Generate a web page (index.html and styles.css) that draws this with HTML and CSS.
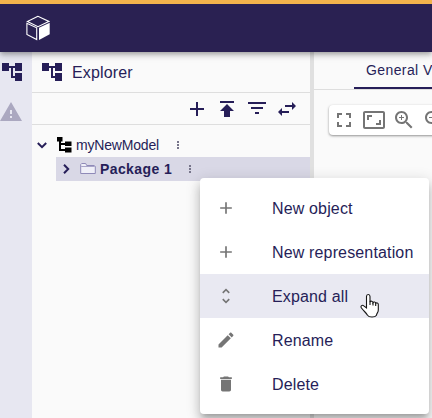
FILE: index.html
```html
<!DOCTYPE html>
<html lang="en">
<head>
<meta charset="utf-8">
<title>Explorer</title>
<link rel="stylesheet" href="styles.css">
</head>
<body>
<svg class="defs">
  <symbol id="tree" viewBox="0 0 24 24"><path d="M22 11V3h-7v3H9V3H2v8h7V8h2v10h4v3h7v-8h-7v3h-2V8h2v3z"/></symbol>
  <symbol id="add" viewBox="0 0 24 24"><path d="M19 13h-6v6h-2v-6H5v-2h6V5h2v6h6v2z"/></symbol>
  <symbol id="dots" viewBox="0 0 12 12"><path d="M5 2h2v2H5zM5 5h2v2H5zM5 8h2v2H5z"/></symbol>
</svg>
<div class="app">
  <header class="navbar">
    <svg class="logo" viewBox="0 0 24 26"><path class="logo-line" d="M12 1.3 1.4 6.4 12 11.7 22.8 6.4zM.9 8.3v11.2l9.8 5V12.8z"/><path class="logo-face" d="M13 12.8 23.7 7.8V19.3L13 24.9z"/></svg>
  </header>
  <main class="workbench">
    <nav class="rail">
      <svg class="icon"><use href="#tree"/></svg>
      <svg class="icon warning" viewBox="0 0 24 24"><path d="M1 21h22L12 2 1 21zm12-3h-2v-2h2v2zm0-4h-2v-4h2v4z"/></svg>
    </nav>
    <section class="explorer">
      <div class="explorer-title"><svg class="icon"><use href="#tree"/></svg><span>Explorer</span></div>
      <div class="explorer-tools">
        <svg class="icon"><use href="#add"/></svg>
        <svg class="icon" viewBox="0 0 24 24"><path d="M5 4v2h14V4H5zm0 10h4v6h6v-6h4l-7-7-7 7z"/></svg>
        <svg class="icon filter" viewBox="0 0 24 24"><path d="M10 18h4v-2h-4v2zM3 6v2h18V6H3zm3 7h12v-2H6v2z"/></svg>
        <svg class="icon" viewBox="0 0 24 24"><path d="M6.99 11L3 15l3.99 4v-3H14v-2H6.99v-3zM21 9l-3.99-4v3H10v2h7.01v3L21 9z"/></svg>
      </div>
      <div class="tree">
        <div class="node">
          <svg class="chevron" viewBox="0 0 20 20"><path d="m5.8 8 4.2 4.2L14.200 8"/></svg>
          <svg class="model" viewBox="0 0 16 16"><path d="M1 0h5.500v4.500H5V6h4V4.500h6.500v4.500H9V8H5v4h4v-1.500h6.500V15.500H9V14H3V4.500H1z"/></svg>
          <span class="label">myNewModel</span>
          <svg class="more"><use href="#dots"/></svg>
        </div>
        <div class="node child">
          <svg class="chevron" viewBox="0 0 20 20"><path d="m8 5.800 4.200 4.200L8 14.200"/></svg>
          <svg class="folder" viewBox="0 0 16 16"><path class="folder-back" d="M.7 12.500V3.500l1-1h4l1 2h7.600l1 1v7z"/><path class="folder-front" d="M1.200 5.500h13.600"/></svg>
          <span class="label">Package 1</span>
          <svg class="more"><use href="#dots"/></svg>
        </div>
      </div>
    </section>
    <div class="splitter"></div>
    <section class="editor">
      <div class="tabs"><div class="tab">General View</div></div>
      <div class="canvas-tools">
        <svg class="icon" viewBox="0 0 24 24"><path d="M7 14H5v5h5v-2H7v-3zm-2-4h2V7h3V5H5v5zm12 7h-3v2h5v-5h-2v3zM14 5v2h3v3h2V5h-5z"/></svg>
        <svg class="icon" viewBox="0 0 24 24"><path d="M19 12h-2v3h-3v2h5v-5zM7 9h3V7H5v5h2V9zm14-6H3c-1.100 0-2 .9-2 2v14c0 1.100.9 2 2 2h18c1.100 0 2-.9 2-2V5c0-1.100-.9-2-2-2zm0 16.010H3V4.990h18v14.020z"/></svg>
        <svg class="icon" viewBox="0 0 24 24"><path d="M15.500 14h-.79l-.28-.27C15.410 12.590 16 11.110 16 9.500 16 5.910 13.090 3 9.500 3S3 5.910 3 9.500 5.910 16 9.500 16c1.610 0 3.090-.59 4.230-1.570l.27.28v.79l5 4.990L20.490 19l-4.990-5zm-6 0C7.010 14 5 11.990 5 9.500S7.010 5 9.500 5 14 7.010 14 9.500 11.990 14 9.500 14zm2.500-4h-2v2H9v-2H7V9h2V7h1v2h2v1z"/></svg>
        <svg class="icon" viewBox="0 0 24 24"><path d="M15.500 14h-.79l-.28-.27C15.410 12.590 16 11.110 16 9.500 16 5.910 13.090 3 9.500 3S3 5.910 3 9.500 5.910 16 9.500 16c1.610 0 3.090-.59 4.230-1.570l.27.28v.79l5 4.990L20.490 19l-4.990-5zm-6 0C7.010 14 5 11.990 5 9.500S7.010 5 9.500 5 14 7.010 14 9.500 11.990 14 9.500 14zM7 9h5v1H7z"/></svg>
      </div>
    </section>
  </main>
</div>
<div class="menu">
  <div class="item"><svg><use href="#add"/></svg><span>New object</span></div>
  <div class="item"><svg><use href="#add"/></svg><span>New representation</span></div>
  <div class="item hover"><svg viewBox="0 0 24 24"><path d="M12 5.830L15.170 9l1.410-1.410L12 3 7.410 7.590 8.830 9 12 5.830zm0 12.340L8.830 15l-1.410 1.410L12 21l4.590-4.590L15.170 15 12 18.170z"/></svg><span>Expand all</span></div>
  <div class="item"><svg viewBox="0 0 24 24"><path d="M3 17.250V21h3.750L17.810 9.940l-3.750-3.750L3 17.250zM20.710 7.040c.39-.39.39-1.020 0-1.410l-2.340-2.340c-.39-.39-1.020-.39-1.410 0l-1.830 1.830 3.750 3.750 1.830-1.830z"/></svg><span>Rename</span></div>
  <div class="item"><svg viewBox="0 0 24 24"><path d="M6 19c0 1.100.9 2 2 2h8c1.100 0 2-.9 2-2V7H6v12zM19 4h-3.500l-1-1h-5l-1 1H5v2h14V4z"/></svg><span>Delete</span></div>
</div>
<svg class="pointer" viewBox="0 0 20 26"><path d="M6.500 15V3.500c0-2.600 3.500-2.600 3.500 0V9c.5-1.300 3-1 3 .6.700-1.100 2.700-.8 2.700.8.800-.9 2.600-.5 2.600 1.100V17c0 3-1.800 3.200-1.800 5.200-1.500 2.400-7.500 2.400-9 0C6.500 20 3.500 18 1.300 14.700c-1-1.700 1-3.200 2.500-1.800z"/><path d="M10 8.500V12M13 9.500V12.500M15.700 10.500V13"/></svg>
</body>
</html>
```

FILE: styles.css
```css
* { box-sizing: border-box; }
body {
  margin: 0;
  width: 432px;
  height: 418px;
  overflow: hidden;
  font-family: "Liberation Sans", Arial, sans-serif;
  color: #261e58;
  background: #fafafa;
}
svg { display: block; flex: none; fill: currentColor; }
.defs { position: absolute; width: 0; height: 0; }
.app { display: flex; flex-direction: column; height: 418px; }
.navbar {
  height: 52px;
  flex: none;
  border-top: 4px solid #f3b34c;
  background: #2a2152;
  padding: 11px 26px;
  box-shadow: 0 2px 4px -1px rgba(0,0,0,.2), 0 4px 5px rgba(0,0,0,.14), 0 1px 10px rgba(0,0,0,.12);
  z-index: 1;
}
.logo { width: 24px; height: 26px; }
.logo-line { fill: none; stroke: #fff; stroke-width: 1.1; }
.logo-face { fill: #fff; }
.workbench { display: flex; flex: 1; min-height: 0; }
.icon { width: 24px; height: 24px; }
.rail { width: 32px; flex: none; background: #e7e7f1; padding-top: 8px; display: flex; flex-direction: column; gap: 16px; }
.rail .icon { color: #261e58; }
.rail .warning { color: #aba8c0; margin-left: -1px; }
.explorer { width: 278px; flex: none; }
.explorer-title {
  height: 41px;
  display: flex;
  align-items: center;
  gap: 8px;
  padding-left: 8px;
  border-bottom: 1px solid #dedede;
  font-size: 16px;
  letter-spacing: .15px;
}
.explorer-title span { padding-top: 2px; }
.explorer-tools {
  height: 32px;
  display: flex;
  justify-content: flex-end;
  align-items: center;
  gap: 6px;
  padding-right: 11px;
  border-bottom: 1px solid #dedede;
}
.filter { margin-top: -1px; }
.tree { padding-top: 8px; }
.node { height: 24px; display: flex; align-items: center; font-size: 14px; }
.chevron { width: 20px; height: 20px; fill: none; stroke: currentColor; stroke-width: 2; }
.model { width: 16px; height: 16px; color: #000; margin: 0 0 0 4px; }
.folder { width: 16px; height: 16px; margin: 0 4px; }
.folder-back { fill: #efeff8; stroke: #8f8ab8; stroke-width: 1; }
.folder-front { fill: none; stroke: #a8a4c8; stroke-width: 1; }
.label { margin-left: 4px; width: 84px; letter-spacing: -.18px; white-space: nowrap; }
.child .label { margin-left: 0; width: 72px; letter-spacing: .4px; }
.more { width: 12px; height: 12px; color: #77758a; margin-left: 12px; }
.child { margin-left: 24px; background: #d9d8e6; font-weight: bold; }
.splitter { width: 4px; flex: none; background: #e0e0e0; }
.editor { flex: 1; min-width: 0; overflow: hidden; }
.tabs { height: 38px; border-bottom: 1px solid #dedede; padding-left: 40px; }
.tab {
  height: 37px;
  width: 120px;
  padding-left: 12px;
  border-bottom: 2px solid #261e58;
  font-size: 14px;
  line-height: 36px;
  letter-spacing: .4px;
  white-space: nowrap;
}
.canvas-tools {
  display: flex;
  gap: 6px;
  width: 220px;
  height: 30px;
  margin: 15px 0 0 15px;
  padding: 3px;
  border-radius: 4px;
  color: #757575;
  background: #fff;
  box-shadow: 0 1px 3px rgba(0,0,0,.25), 0 1px 2px rgba(0,0,0,.2);
}
.menu {
  position: absolute;
  z-index: 2;
  left: 200px;
  top: 178px;
  width: 229px;
  padding: 8px 0;
  border-radius: 4px;
  background: #fff;
  box-shadow: 0 5px 5px -3px rgba(0,0,0,.2), 0 8px 10px 1px rgba(0,0,0,.14), 0 3px 14px 2px rgba(0,0,0,.12);
}
.item { height: 44px; display: flex; align-items: center; gap: 36px; padding-left: 16px; font-size: 16px; letter-spacing: .15px; white-space: nowrap; }
.item span { padding-top: 2px; }
.item svg { width: 20px; height: 20px; color: #757575; }
.hover { background: #e9e9f2; }
.pointer { position: absolute; z-index: 3; left: 360px; top: 293px; width: 20px; height: 26px; fill: #fff; stroke: #151515; stroke-width: 1.1; }
```
